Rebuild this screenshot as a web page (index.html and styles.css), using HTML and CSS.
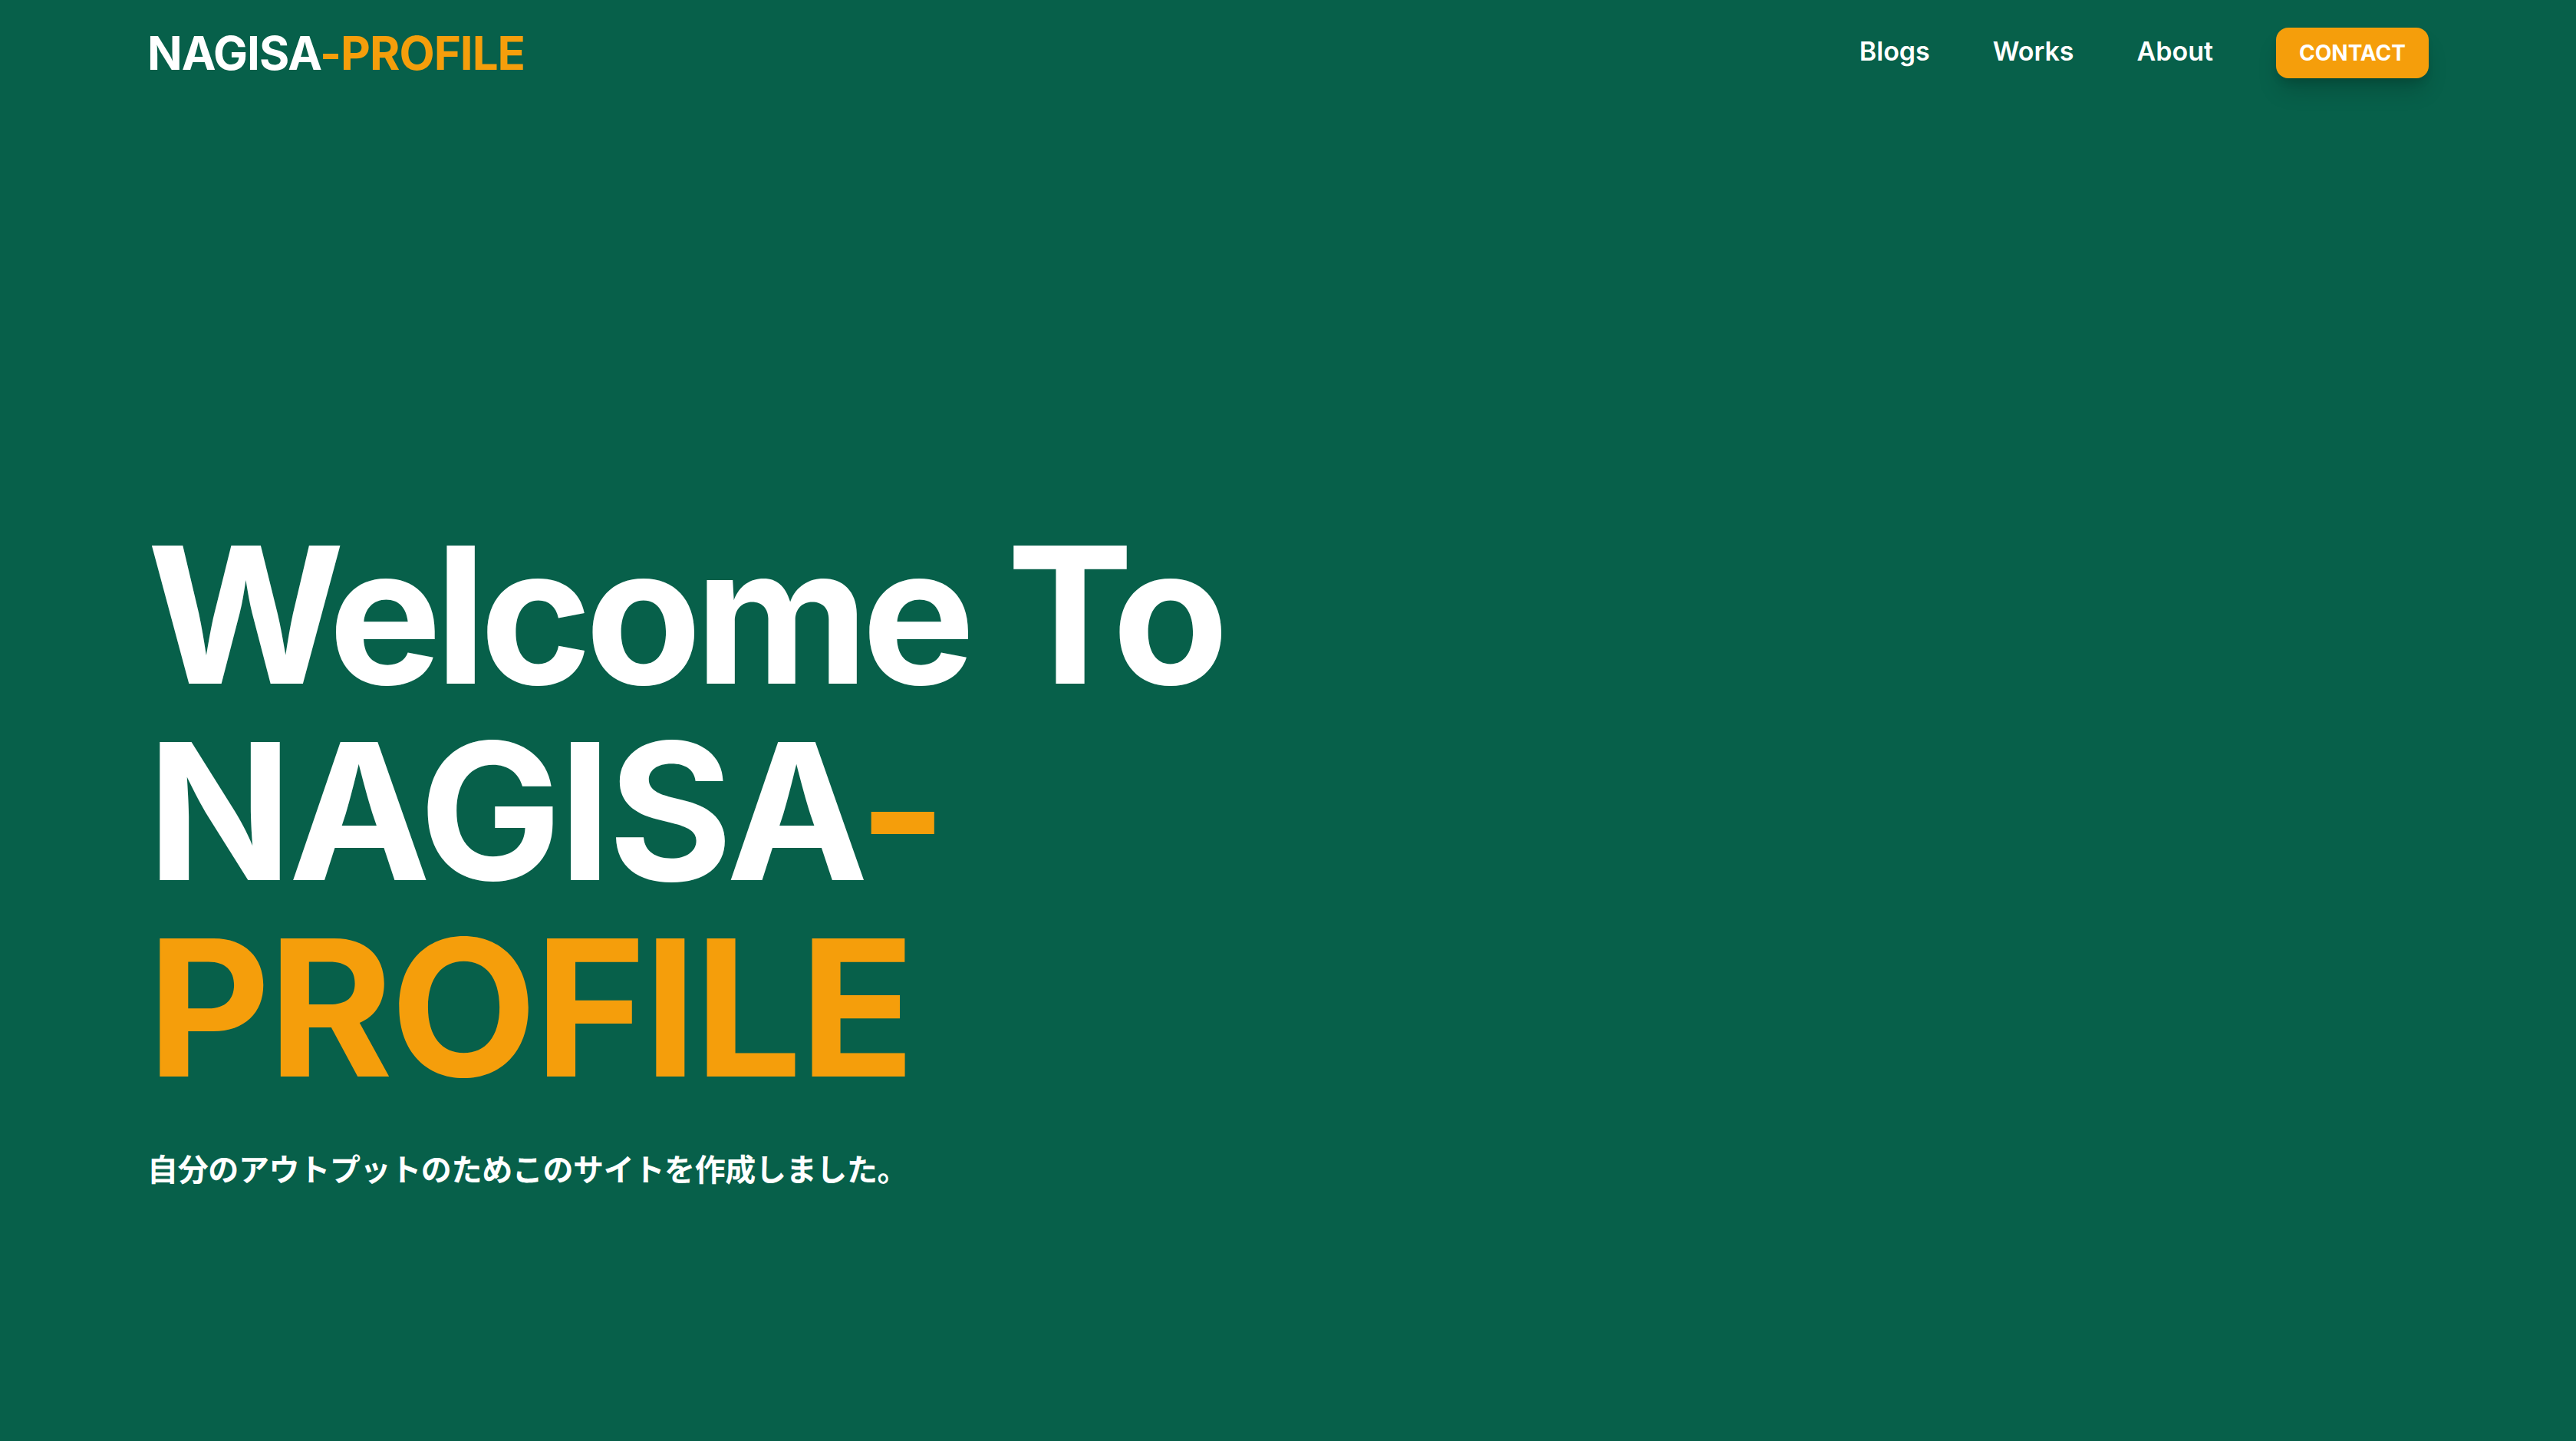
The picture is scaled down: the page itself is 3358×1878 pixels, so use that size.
FILE: index.html
```html
<!DOCTYPE html>
<html lang="ja">
<head>
<meta charset="utf-8">
<title>NAGISA-PROFILE</title>
<link rel="stylesheet" href="styles.css">
</head>
<body>
<div class="page">
  <header class="header">
    <a class="logo" href="#">NAGISA<span class="accent">-PROFILE</span></a>
    <nav class="nav">
      <a class="nav-link" href="#">Blogs</a>
      <a class="nav-link" href="#">Works</a>
      <a class="nav-link" href="#">About</a>
      <a class="contact" href="#">CONTACT</a>
    </nav>
  </header>
  <main class="hero">
    <h1 class="title">
      <span class="line line-welcome">Welcome To</span>
      <span class="line line-name">NAGISA<span class="accent">-</span></span>
      <span class="line line-profile accent">PROFILE</span>
    </h1>
    <p class="lead">自分のアウトプットのためこのサイトを作成しました。</p>
  </main>
</div>
</body>
</html>
```
FILE: styles.css
```css
* { box-sizing: border-box; }
html, body { margin: 0; padding: 0; }
body {
  background: #07604a;
  color: #ffffff;
  font-family: Inter, "Noto Sans CJK JP", sans-serif;
  min-height: 100vh;
}
a { color: inherit; text-decoration: none; }
.page { padding: 0 192px; }
.header {
  display: flex;
  justify-content: space-between;
  align-items: center;
  padding-top: 36px;
}
.logo {
  font-size: 60px;
  font-weight: 700;
  line-height: 1;
  letter-spacing: -1px;
}
.accent { color: #f59e0b; }
.nav {
  display: flex;
  align-items: center;
  gap: 82px;
}
.nav-link {
  font-size: 34px;
  font-weight: 600;
  line-height: 1;
  padding-bottom: 5px;
}
.contact {
  background: #f59e0b;
  color: #fff;
  font-size: 28px;
  font-weight: 700;
  line-height: 40px;
  padding: 13px 30px;
  border-radius: 16px;
  box-shadow: 0 20px 30px -6px rgba(0,0,0,0.18), 0 8px 12px -4px rgba(0,0,0,0.12);
}
.hero { padding-top: 571px; }
.title {
  margin: 0;
  font-size: 248px;
  font-weight: 700;
  line-height: 256px;
}
.line { display: block; }
.line-welcome { letter-spacing: -8.8px; }
.line-name { letter-spacing: -4.7px; }
.line-profile { letter-spacing: -3.3px; }
.lead {
  margin: 51px 0 0;
  font-family: "Noto Sans CJK JP", sans-serif;
  font-size: 40px;
  font-weight: 700;
  line-height: 60px;
  letter-spacing: -0.35px;
}
```
